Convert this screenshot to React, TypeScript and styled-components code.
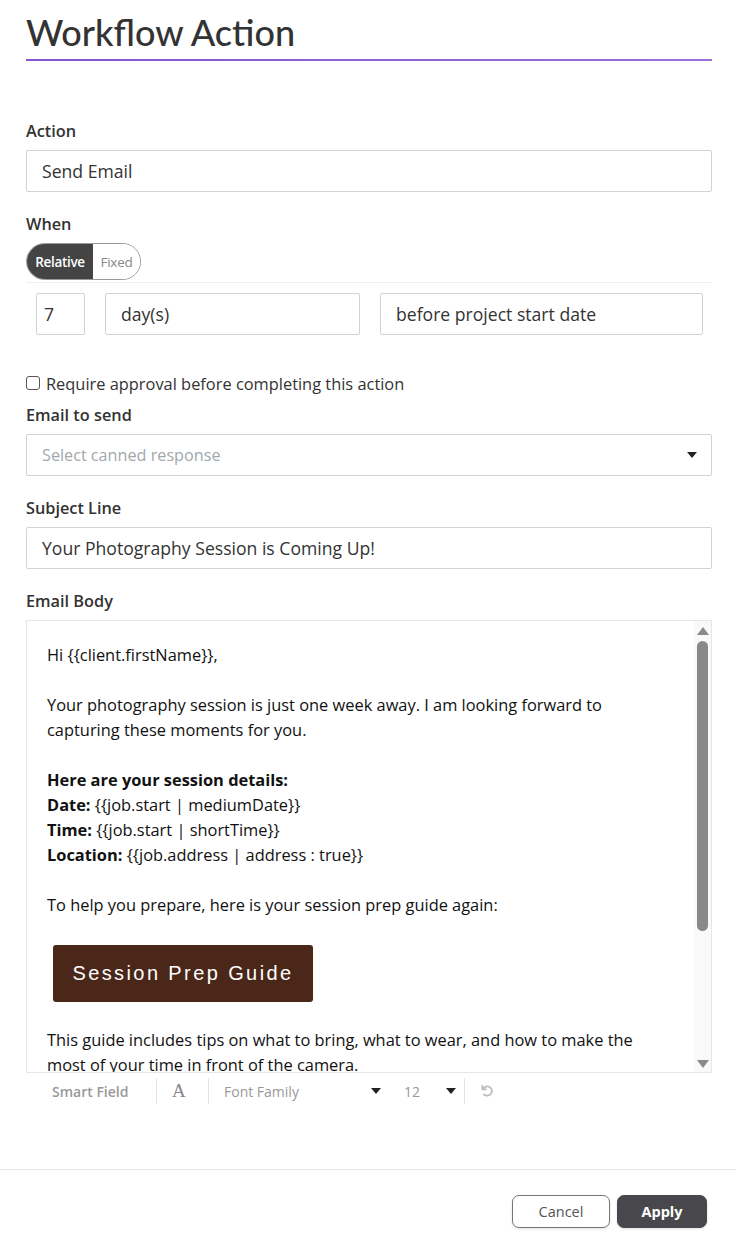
import React from "react";
import styled, { createGlobalStyle } from "styled-components";

const Global = createGlobalStyle`
  html, body { margin: 0; padding: 0; background: #fff; }
  body { font-family: "Open Sans", Lato, sans-serif; color: #333; }
  * { box-sizing: border-box; }
`;

const Page = styled.div`
  width: 736px;
  min-height: 1243px;
  display: flex;
  flex-direction: column;
`;

const Main = styled.div`
  padding: 0 24px 0 26px;
  display: flex;
  flex-direction: column;
`;

const Title = styled.h1`
  margin: 0;
  padding-top: 10px;
  font-family: Lato, sans-serif;
  font-size: 36px;
  font-weight: 500;
  color: #333;
  line-height: 44px;
  height: 59px;
`;

const Rule = styled.div`
  height: 2px;
  background: linear-gradient(90deg, #7f56d0, #9b70d8);
  margin-bottom: 60px;
`;

const Label = styled.div<{ $mt?: number }>`
  font-size: 16.3px;
  font-weight: 600;
  color: #333;
  line-height: 20px;
  margin-top: ${(p) => p.$mt ?? 0}px;
  margin-bottom: 9px;
`;

const Field = styled.div<{ $w?: string; $pl?: number; $placeholder?: boolean }>`
  height: 42px;
  width: ${(p) => p.$w ?? "100%"};
  border: 1px solid #d2d2d2;
  border-radius: 2px;
  display: flex;
  align-items: center;
  padding-left: ${(p) => p.$pl ?? 15}px;
  padding-right: 14px;
  font-size: ${(p) => (p.$placeholder ? "16.2px" : "17.6px")};
  color: ${(p) => (p.$placeholder ? "#a2a8ad" : "#333")};
  background: #fff;
  flex: none;
`;

const Caret = styled.span`
  margin-left: auto;
  width: 0;
  height: 0;
  border-left: 5px solid transparent;
  border-right: 5px solid transparent;
  border-top: 6px solid #222;
`;

const Toggle = styled.div`
  display: flex;
  width: 115px;
  height: 37px;
  border: 1px solid #999;
  border-radius: 19px;
  overflow: hidden;
`;

const ToggleOpt = styled.div<{ $active?: boolean }>`
  display: flex;
  align-items: center;
  justify-content: center;
  padding: 0 4px;
  font-size: 13.5px;
  letter-spacing: -0.3px;
  background: ${(p) => (p.$active ? "#444" : "#fff")};
  color: ${(p) => (p.$active ? "#fff" : "#888")};
  font-weight: ${(p) => (p.$active ? 600 : 400)};
  width: ${(p) => (p.$active ? "66px" : "auto")};
  flex: ${(p) => (p.$active ? "none" : "1")};
`;

const Divider = styled.div`
  height: 1px;
  background: #eee;
  margin-top: 2px;
`;

const WhenRow = styled.div`
  display: flex;
  gap: 20px;
  padding-left: 10px;
  margin-top: 10px;
  margin-right: 10px;
`;

const CheckRow = styled.label`
  display: flex;
  align-items: center;
  gap: 6px;
  height: 20px;
  font-size: 16.4px;
  color: #333;
  margin-top: 38px;
  margin-bottom: 12px;
`;

const Box = styled.span`
  width: 14px;
  height: 14px;
  border: 1px solid #555;
  border-radius: 3px;
  display: inline-block;
`;

const Editor = styled.div`
  height: 453px;
  border: 1px solid #e6e6e6;
  display: flex;
  overflow: hidden;
`;

const EditorContent = styled.div`
  flex: 1;
  padding: 21px 0 0 20px;
  font-size: 16.4px;
  line-height: 25px;
  color: #111;
`;

const P = styled.p`
  margin: 0 0 25px;
`;

const GuideButton = styled.div`
  margin: 28px 0 25px 6px;
  width: 260px;
  height: 57px;
  background: #4a2718;
  border-radius: 3px;
  color: #fff;
  font-family: "Liberation Sans", Arial, sans-serif;
  font-size: 20px;
  letter-spacing: 2.4px;
  display: flex;
  align-items: center;
  justify-content: center;
`;

const ScrollTrack = styled.div`
  width: 17px;
  background: #f9f9f9;
  display: flex;
  flex-direction: column;
  align-items: center;
  padding: 6px 0 4px;
`;

const Arrow = styled.span<{ $down?: boolean }>`
  width: 0;
  height: 0;
  border-left: 6px solid transparent;
  border-right: 6px solid transparent;
  ${(p) =>
    p.$down ? "border-top: 8px solid #8a8a8a;" : "border-bottom: 8px solid #8a8a8a;"}
`;

const Thumb = styled.div`
  width: 11px;
  height: 290px;
  background: #898989;
  border-radius: 6px;
  margin-top: 6px;
`;

const Spacer = styled.div`
  flex: 1;
`;

const Toolbar = styled.div`
  display: flex;
  align-items: center;
  height: 26px;
  margin-top: 5px;
  padding-left: 26px;
  color: #999;
  font-size: 14px;
`;

const ToolItem = styled.div<{ $w?: number; $bold?: boolean; $pl?: number }>`
  display: flex;
  align-items: center;
  height: 100%;
  width: ${(p) => (p.$w ? `${p.$w}px` : "auto")};
  font-weight: ${(p) => (p.$bold ? 600 : 400)};
  padding: 0 8px 0 ${(p) => p.$pl ?? 15}px;
`;

const Sep = styled.div`
  width: 1px;
  height: 26px;
  background: #e2e2e2;
`;

const SerifA = styled.span`
  font-family: "Liberation Serif", serif;
  font-size: 19px;
  color: #888;
`;

const Footer = styled.div`
  margin-top: 65px;
  border-top: 1px solid #e5e5e5;
  padding: 25px 29px 0 0;
  display: flex;
  justify-content: flex-end;
  gap: 7px;
`;

const Btn = styled.button<{ $primary?: boolean }>`
  height: 33px;
  width: ${(p) => (p.$primary ? "90px" : "98px")};
  border-radius: 7px;
  font-family: "Open Sans", sans-serif;
  font-size: 14.5px;
  border: 1px solid ${(p) => (p.$primary ? "#48484c" : "#777")};
  background: ${(p) => (p.$primary ? "#48484c" : "#fff")};
  color: ${(p) => (p.$primary ? "#fff" : "#555")};
  font-weight: ${(p) => (p.$primary ? 700 : 400)};
  box-shadow: 0 1px 3px rgba(0, 0, 0, 0.12);
`;

const UndoIcon = () => (
  <svg width="14" height="14" viewBox="0 0 24 24" fill="none" stroke="#bbb" strokeWidth="3" strokeLinecap="round">
    <path d="M5 9a8 8 0 1 1 2 9" />
    <path d="M4 3v6h6" strokeLinejoin="round" />
  </svg>
);

export default function App() {
  return (
    <Page>
      <Global />
      <Main>
        <Title>Workflow Action</Title>
        <Rule />
        <Label>Action</Label>
        <Field>Send Email</Field>
        <Label $mt={22}>When</Label>
        <Toggle>
          <ToggleOpt $active>Relative</ToggleOpt>
          <ToggleOpt>Fixed</ToggleOpt>
        </Toggle>
        <Divider />
        <WhenRow>
          <Field $w="49px" $pl={7}>7</Field>
          <Field $w="255px">day(s)</Field>
          <Field $w="323px">before project start date</Field>
        </WhenRow>
        <CheckRow>
          <Box />
          Require approval before completing this action
        </CheckRow>
        <Label>Email to send</Label>
        <Field $placeholder>
          Select canned response
          <Caret />
        </Field>
        <Label $mt={22}>Subject Line</Label>
        <Field>Your Photography Session is Coming Up!</Field>
        <Label $mt={22}>Email Body</Label>
        <Editor>
          <EditorContent>
            <P>Hi {"{{client.firstName}}"},</P>
            <P>
              Your photography session is just one week away. I am looking forward to
              <br />
              capturing these moments for you.
            </P>
            <P>
              <b>Here are your session details:</b>
              <br />
              <b>Date:</b> {"{{job.start | mediumDate}}"}
              <br />
              <b>Time:</b> {"{{job.start | shortTime}}"}
              <br />
              <b>Location:</b> {"{{job.address | address : true}}"}
            </P>
            <P>To help you prepare, here is your session prep guide again:</P>
            <GuideButton>Session Prep Guide</GuideButton>
            <P>
              This guide includes tips on what to bring, what to wear, and how to make the
              <br />
              most of your time in front of the camera.
            </P>
          </EditorContent>
          <ScrollTrack>
            <Arrow />
            <Thumb />
            <Spacer />
            <Arrow $down />
          </ScrollTrack>
        </Editor>
      </Main>
      <Toolbar>
        <ToolItem $w={130} $bold $pl={26}>Smart Field</ToolItem>
        <Sep />
        <ToolItem $w={51}>
          <SerifA>A</SerifA>
        </ToolItem>
        <Sep />
        <ToolItem $w={180}>
          Font Family
          <Caret />
        </ToolItem>
        <ToolItem $w={75}>
          12
          <Caret />
        </ToolItem>
        <Sep />
        <ToolItem>
          <UndoIcon />
        </ToolItem>
      </Toolbar>
      <Footer>
        <Btn>Cancel</Btn>
        <Btn $primary>Apply</Btn>
      </Footer>
    </Page>
  );
}
